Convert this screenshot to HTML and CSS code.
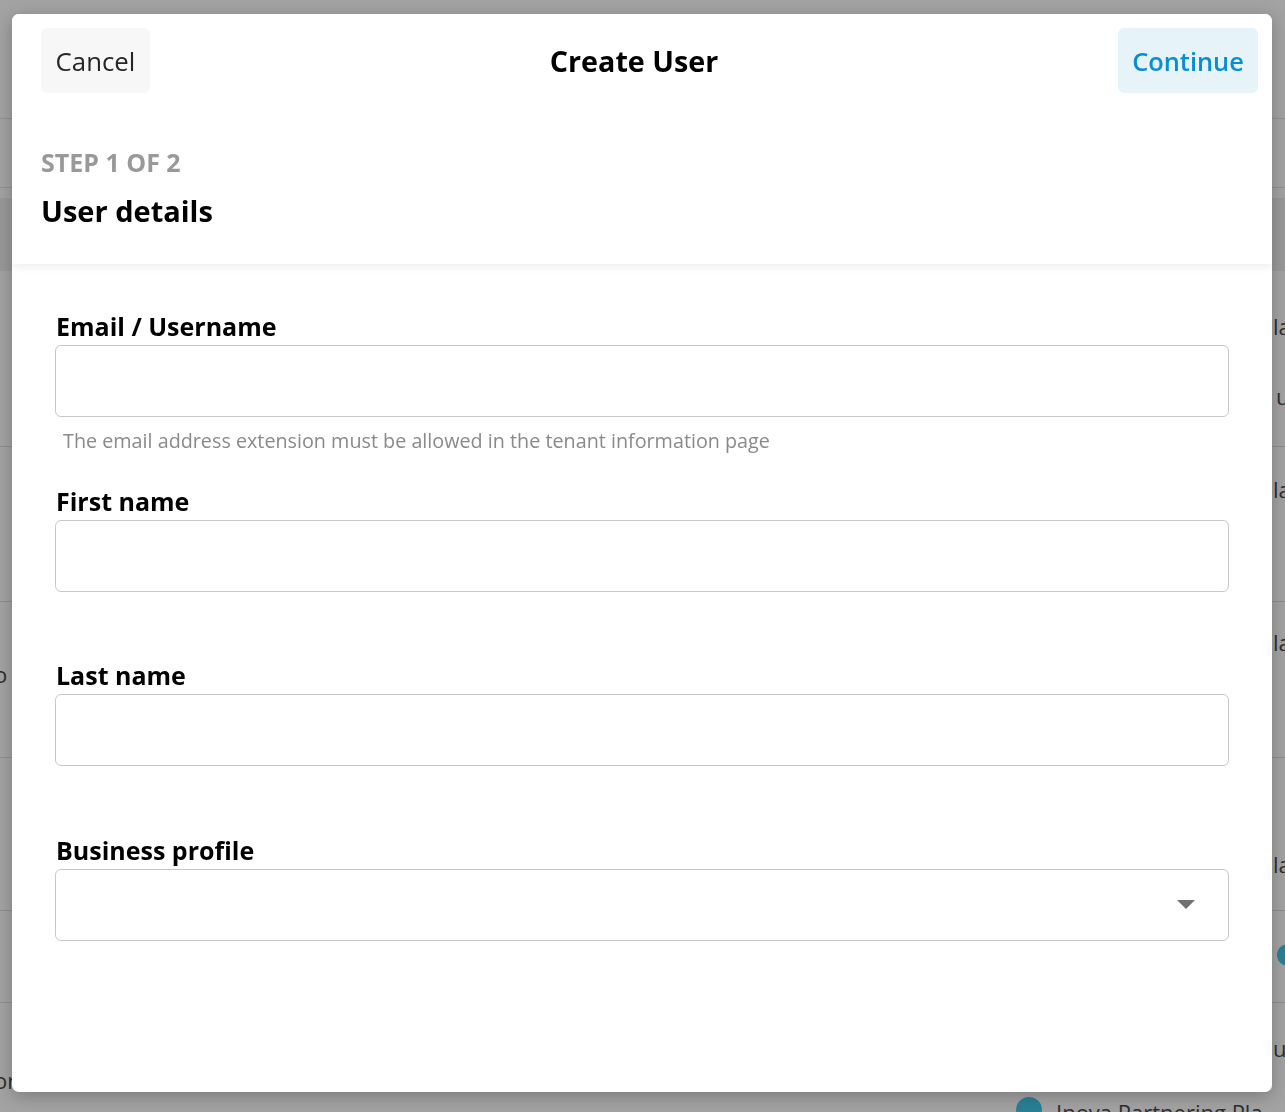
FILE: index.html
```html
<!DOCTYPE html>
<html lang="en">
<head>
<meta charset="utf-8">
<title>Create User</title>
<link rel="stylesheet" href="styles.css">
</head>
<body>
<div class="page">
  <div class="topbar"></div>
  <div class="subbar"></div>
  <div class="thead"></div>
  <div class="row r1"><span class="lt"></span><span class="rt">la</span><span class="rt second">u</span></div>
  <div class="row r2"><span class="lt"></span><span class="rt">la</span></div>
  <div class="row r3"><span class="lt">o</span><span class="rt">la</span></div>
  <div class="row r4"><span class="lt"></span><span class="rt">la</span></div>
  <div class="row r5"><span class="lt"></span><span class="rt"><span class="dot"></span></span></div>
  <div class="row r6"><span class="lt low">or</span><span class="rt">u</span></div>
  <div class="footer-peek"><span class="dot big"></span><span class="peek-text">Inova Partnering Pla</span></div>
</div>

<div class="modal">
  <header class="modal-header">
    <div class="header-row">
      <button class="btn btn-cancel" type="button">Cancel</button>
      <h1 class="title">Create User</h1>
      <button class="btn btn-continue" type="button">Continue</button>
    </div>
    <div class="step">STEP 1 OF 2</div>
    <h2 class="section-title">User details</h2>
  </header>
  <div class="modal-body">
    <div class="field">
      <label class="label">Email / Username</label>
      <input class="input" type="text">
      <div class="hint">The email address extension must be allowed in the tenant information page</div>
    </div>
    <div class="field">
      <label class="label">First name</label>
      <input class="input" type="text">
      <div class="hint"></div>
    </div>
    <div class="field">
      <label class="label">Last name</label>
      <input class="input" type="text">
      <div class="hint"></div>
    </div>
    <div class="field">
      <label class="label">Business profile</label>
      <div class="input select">
        <svg class="caret" width="18" height="9" viewBox="0 0 18 9"><path d="M0 0 L18 0 L9 9 Z" fill="#707070"/></svg>
      </div>
    </div>
  </div>
</div>
</body>
</html>
```

FILE: styles.css
```css
* { box-sizing: border-box; }

html, body {
  margin: 0;
  padding: 0;
  height: 100%;
}

body {
  font-family: "Open Sans", "Liberation Sans", sans-serif;
  background: #a4a3a4;
  color: #000;
  overflow: hidden;
}

/* background page (dimmed) */
.page {
  display: flex;
  flex-direction: column;
  height: 1112px;
}
.topbar { height: 120px; border-bottom: 1px solid #929192; }
.subbar { height: 70px; border-bottom: 1px solid #929192; }
.thead { height: 74px; background: #9a999a; margin-top: 10px; }
.row {
  display: flex;
  justify-content: space-between;
  align-items: flex-start;
  border-bottom: 1px solid #8f8f8f;
  font-size: 22px;
  color: #2e2e2e;
  position: relative;
}
.r1 { height: 177px; }
.r2 { height: 157px; }
.r3 { height: 157px; }
.r4 { height: 155px; }
.r5 { height: 93px; }
.r6 { height: 110px; border-bottom: none; }
.rt { margin-right: -14px; width: 26px; }
.r1 .rt { margin-top: 40px; }
.r1 .rt.second { position: absolute; right: -3px; top: 70px; }
.r2 .rt { margin-top: 27px; }
.r3 .lt { margin-left: -6px; margin-top: 57px; }
.r3 .rt { margin-top: 25px; }
.r4 .rt { margin-top: 91px; }
.r5 .rt { margin-top: 31px; }
.r6 .rt { margin-top: 30px; }
.r6 .lt.low { margin-left: -6px; margin-top: 62px; }
.dot {
  display: inline-block;
  width: 22px;
  height: 22px;
  border-radius: 50%;
  background: #2a8096;
  margin-left: 4px;
}
.footer-peek {
  position: absolute;
  left: 1016px;
  top: 1097px;
  display: flex;
  gap: 14px;
  font-size: 22px;
  color: #2e2e2e;
}
.dot.big { width: 26px; height: 26px; margin-left: 0; }

/* modal */
.modal {
  position: fixed;
  top: 14px;
  left: 12px;
  width: 1260px;
  height: 1078px;
  background: #fff;
  border-radius: 7px;
  box-shadow: 0 4px 18px rgba(0, 0, 0, 0.25);
  display: flex;
  flex-direction: column;
  overflow: hidden;
}

.modal-header {
  padding: 14px 14px 35px;
  background: #fff;
  box-shadow: 0 3px 8px rgba(0, 0, 0, 0.07);
  position: relative;
  z-index: 1;
}

.header-row {
  display: flex;
  align-items: center;
  height: 65px;
}

.btn {
  font-family: "Open Sans", "Liberation Sans", sans-serif;
  border: none;
  border-radius: 6px;
  height: 65px;
  padding: 0;
  cursor: pointer;
}
.btn-cancel {
  margin-left: 15px;
  width: 109px;
  background: #f7f7f7;
  color: #262626;
  font-size: 25.8px;
  font-weight: 400;
}
.btn-continue {
  width: 140px;
  background: #e6f3f9;
  color: #0a8dd2;
  font-size: 25.4px;
  font-weight: 600;
}

.title {
  flex: 1;
  text-align: center;
  margin: 0;
  font-size: 28.7px;
  font-weight: 700;
  color: #000;
}

.step {
  margin: 54px 0 0 15px;
  font-size: 25px;
  line-height: 30px;
  font-weight: 700;
  color: #999;
}

.section-title {
  margin: 16px 0 0 15px;
  font-size: 29px;
  line-height: 36px;
  font-weight: 700;
  color: #000;
}

.modal-body {
  flex: 1;
  padding: 47px 43px;
  display: flex;
  flex-direction: column;
  gap: 32.6px;
}

.field {
  display: flex;
  flex-direction: column;
}

.label {
  font-size: 25px;
  line-height: 30px;
  font-weight: 700;
  margin-left: 1px;
  color: #000;
}

.input {
  margin-top: 4px;
  height: 72px;
  width: 100%;
  border: 1px solid #c8c8c8;
  border-radius: 6px;
  background: #fff;
  font-family: "Open Sans", "Liberation Sans", sans-serif;
  font-size: 22px;
  padding: 0 16px;
}

.select {
  display: flex;
  align-items: center;
  justify-content: flex-end;
  padding-right: 33px;
}
.caret { display: block; margin-top: 0; }

.hint {
  margin-top: 12px;
  height: 24px;
  line-height: 24px;
  font-size: 19.75px;
  color: #8a8a8a;
  padding-left: 8px;
}
```
